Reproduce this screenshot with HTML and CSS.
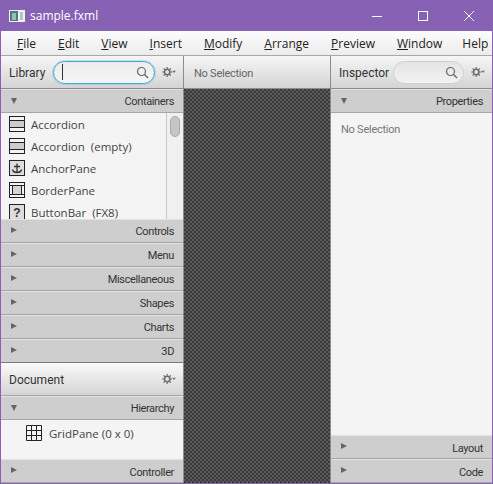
FILE: index.html
```html
<!DOCTYPE html>
<html>
<head>
    <title>sample.fxml</title>
    <link rel="stylesheet" href="styles.css">
</head>
<body>

<div class="window">
    <div class="titlebar">
        <svg class="app-icon" width="16" height="14" viewBox="0 0 16 14">
            <rect x="0" y="1" width="16" height="12" fill="#eef2f0"/>
            <rect x="1" y="2" width="8" height="10" fill="#4d7a82"/>
            <rect x="3" y="4" width="4" height="7" fill="#9dbcb8"/>
            <rect x="11" y="3" width="3" height="8" fill="#b4c4c4"/>
        </svg>
        <span class="title">sample.fxml</span>
        <div class="win-buttons">
            <svg width="12" height="12" viewBox="0 0 12 12"><path d="M1 6.5h10" stroke="#fff"/></svg>
            <svg width="12" height="12" viewBox="0 0 12 12"><rect x="1.5" y="1.5" width="9" height="9" fill="none" stroke="#fff"/></svg>
            <svg width="12" height="12" viewBox="0 0 12 12"><path d="M1 1l10 10M11 1L1 11" stroke="#fff"/></svg>
        </div>
    </div>

    <div class="menubar">
        <span><u>F</u>ile</span>
        <span><u>E</u>dit</span>
        <span><u>V</u>iew</span>
        <span><u>I</u>nsert</span>
        <span><u>M</u>odify</span>
        <span><u>A</u>rrange</span>
        <span><u>P</u>review</span>
        <span><u>W</u>indow</span>
        <span>Help</span>
    </div>

    <div class="main">
        <div class="left">
            <div class="toolbar">
                <span class="tool-label">Library</span>
                <div class="search focused">
                    <span class="caret"></span>
                    <svg width="13" height="13" viewBox="0 0 13 13"><circle cx="5.5" cy="5.5" r="4" fill="none" stroke="#666" stroke-width="1.2"/><path d="M8.5 8.5l3.5 3.5" stroke="#666" stroke-width="1.4"/></svg>
                </div>
                <svg class="gear" width="14" height="10" viewBox="0 0 15 11"><use href="#gear"/></svg>
            </div>

            <div class="section open"><span class="arrow-down"></span>Containers</div>
            <div class="lib-list">
                <div class="lib-items">
                    <div class="lib-item">
                        <svg width="16" height="16" viewBox="0 0 16 16"><rect x="0.5" y="0.5" width="15" height="15" fill="#ccc" stroke="#222"/><path d="M0 4.5h16M0 11.5h16" stroke="#222"/><rect x="1" y="1" width="14" height="3" fill="#f4f4f4"/><rect x="1" y="12" width="14" height="3" fill="#f4f4f4"/></svg>
                        <span>Accordion</span>
                    </div>
                    <div class="lib-item">
                        <svg width="16" height="16" viewBox="0 0 16 16"><rect x="0.5" y="0.5" width="15" height="15" fill="#ccc" stroke="#222"/><path d="M0 4.5h16M0 11.5h16" stroke="#222"/><rect x="1" y="1" width="14" height="3" fill="#f4f4f4"/><rect x="1" y="12" width="14" height="3" fill="#f4f4f4"/></svg>
                        <span>Accordion&nbsp; (empty)</span>
                    </div>
                    <div class="lib-item">
                        <svg width="16" height="16" viewBox="0 0 16 16"><rect x="0.5" y="0.5" width="15" height="15" fill="#ddd" stroke="#222"/><path d="M8 3.5v9M5 6.5h6M3.5 9.5c.5 2.5 2.5 3 4.5 3s4-.5 4.500-3" fill="none" stroke="#333" stroke-width="1.300"/></svg>
                        <span>AnchorPane</span>
                    </div>
                    <div class="lib-item">
                        <svg width="16" height="16" viewBox="0 0 16 16"><rect x="0.5" y="0.5" width="15" height="15" fill="#f4f4f4" stroke="#222"/><rect x="3.5" y="3.5" width="9" height="9" fill="#d4d4d4"/><path d="M0 3.500h16M0 12.500h16M3.500 3v10M12.500 3v10" stroke="#222"/></svg>
                        <span>BorderPane</span>
                    </div>
                    <div class="lib-item">
                        <svg width="16" height="16" viewBox="0 0 16 16"><rect x="0.5" y="0.5" width="15" height="15" fill="#ddd" stroke="#222"/><text x="8" y="13" text-anchor="middle" class="q-mark">?</text></svg>
                        <span>ButtonBar&nbsp; (FX8)</span>
                    </div>
                </div>
                <div class="scroll-track"><div class="scroll-thumb"></div></div>
            </div>

            <div class="section"><span class="arrow-right"></span>Controls</div>
            <div class="section"><span class="arrow-right"></span>Menu</div>
            <div class="section"><span class="arrow-right"></span>Miscellaneous</div>
            <div class="section"><span class="arrow-right"></span>Shapes</div>
            <div class="section"><span class="arrow-right"></span>Charts</div>
            <div class="section last"><span class="arrow-right"></span>3D</div>

            <div class="toolbar doc-bar">
                <span class="tool-label">Document</span>
                <svg class="gear" width="14" height="10" viewBox="0 0 15 11"><use href="#gear"/></svg>
            </div>

            <div class="section open"><span class="arrow-down"></span>Hierarchy</div>
            <div class="hierarchy">
                <svg width="16" height="16" viewBox="0 0 16 16"><path d="M.5.500h15v15H.5zM5.500 0v16M10.500 0v16M0 5.500h16M0 10.500h16" fill="none" stroke="#222"/></svg>
                <span>GridPane (0 x 0)</span>
            </div>
            <div class="section tail"><span class="arrow-right"></span>Controller</div>
        </div>

        <div class="center">
            <div class="toolbar center-bar">No Selection</div>
            <div class="canvas"></div>
        </div>

        <div class="right">
            <div class="toolbar">
                <span class="tool-label">Inspector</span>
                <div class="search">
                    <svg width="13" height="13" viewBox="0 0 13 13"><circle cx="5.500" cy="5.500" r="4" fill="none" stroke="#666" stroke-width="1.200"/><path d="M8.500 8.500l3.500 3.500" stroke="#666" stroke-width="1.400"/></svg>
                </div>
                <svg class="gear" width="14" height="10" viewBox="0 0 15 11"><use href="#gear"/></svg>
            </div>
            <div class="section open"><span class="arrow-down"></span>Properties</div>
            <div class="props">No Selection</div>
            <div class="section tail"><span class="arrow-right"></span>Layout</div>
            <div class="section tail"><span class="arrow-right"></span>Code</div>
        </div>
    </div>
</div>

<svg class="defs" width="0" height="0">
    <defs>
        <g id="gear">
            <circle cx="5.500" cy="5.500" r="3" fill="none" stroke="#6a6a6a" stroke-width="1.800"/>
            <path d="M5.500 0v2M5.500 9v2M0 5.500h2M9 5.500h2M1.600 1.600l1.400 1.400M8 8l1.400 1.400M9.400 1.600L8 3M3 8L1.600 9.400" stroke="#6a6a6a" stroke-width="1.300"/>
            <path d="M11 4h4l-2 2.500z" fill="#6a6a6a"/>
        </g>
    </defs>
</svg>

</body>
</html>
```

FILE: styles.css
```css
* {
    box-sizing: border-box;
}

body {
    margin: 0;
    font-family: 'Open Sans', 'Noto Sans', sans-serif;
    font-size: 12px;
    color: #333;
    background-color: #f4f4f4;
}

.window {
    width: 493px;
    height: 484px;
    display: flex;
    flex-direction: column;
    border: 1px solid #8661b4;
    border-top: none;
    overflow: hidden;
}

.titlebar {
    height: 31px;
    flex: none;
    margin: 0 -1px;
    padding: 0 18px 0 9px;
    display: flex;
    align-items: center;
    background-color: #8661b4;
    color: #fff;
}

.app-icon {
    margin-right: 5px;
}

.title {
    font-size: 12px;
}

.win-buttons {
    margin-left: auto;
    display: flex;
    gap: 34px;
}

.menubar {
    height: 25px;
    flex: none;
    display: flex;
    align-items: center;
    gap: 22px;
    padding: 0 5px 0 16px;
    background: linear-gradient(#fcfcfc, #ececec);
    border-bottom: 1px solid #a8a8a8;
    color: #222;
}

.menubar span:last-child {
    margin-left: -2px;
}

.main {
    flex: 1;
    display: flex;
    min-height: 0;
}

.left {
    width: 183px;
    flex: none;
    display: flex;
    flex-direction: column;
    border-right: 1px solid #8c8c8c;
}

.center {
    width: 146px;
    flex: none;
    display: flex;
    flex-direction: column;
}

.right {
    flex: 1;
    display: flex;
    flex-direction: column;
    border-left: 1px solid #8c8c8c;
}

.toolbar {
    height: 33px;
    flex: none;
    display: flex;
    align-items: center;
    padding: 0 7px 0 8px;
    background: linear-gradient(#f6f6f6, #d4d4d4);
    border-bottom: 1px solid #8c8c8c;
}

.tool-label {
    padding-top: 2px;
    font-family: Roboto, 'Open Sans', sans-serif;
    font-size: 12px;
    color: #333;
}

.gear {
    margin-left: 7px;
    flex: none;
}

.search {
    flex: 1;
    height: 23px;
    margin-left: 8px;
    display: flex;
    align-items: center;
    padding: 0 5px 0 8px;
    border: 1px solid #d0d0d0;
    border-radius: 12px;
    background: linear-gradient(#e4e4e4, #f2f2f2);
}

.right .search {
    margin-left: 4px;
}

.search svg {
    margin-left: auto;
}

.search.focused {
    border-color: #3fa9d0;
    background: linear-gradient(#ececec, #f6f6f6);
    box-shadow: 0 0 0 1px rgba(63, 169, 208, 0.25);
}

.caret {
    width: 1px;
    height: 16px;
    background-color: #333;
}

.section {
    height: 24px;
    flex: none;
    position: relative;
    display: flex;
    align-items: center;
    justify-content: flex-end;
    padding: 0 9px 0 0;
    background-color: #cecece;
    border-bottom: 1px solid #a6a6a6;
    border-top: 1px solid #e2e2e2;
    color: #333;
    font-family: Roboto, 'Open Sans', sans-serif;
    font-size: 11px;
    letter-spacing: -0.35px;
}

.section.tail {
    padding-top: 2px;
}

.section.last {
    border-bottom-color: #7c7c7c;
}

.arrow-right,
.arrow-down {
    position: absolute;
    left: 10px;
    width: 0;
    height: 0;
}

.arrow-right {
    top: 7px;
    border-left: 6px solid #666;
    border-top: 3px solid transparent;
    border-bottom: 3px solid transparent;
}

.arrow-down {
    top: 8px;
    border-top: 6px solid #666;
    border-left: 3px solid transparent;
    border-right: 3px solid transparent;
}

.lib-list {
    height: 106px;
    flex: none;
    display: flex;
    overflow: hidden;
    background-color: #f4f4f4;
}

.lib-items {
    flex: 1;
    overflow: hidden;
    padding-left: 8px;
}

.lib-item {
    height: 22px;
    display: flex;
    align-items: center;
    gap: 6px;
    color: #444;
    font-size: 11.500px;
}

.q-mark {
    font-family: 'Liberation Sans', sans-serif;
    font-size: 12px;
    font-weight: bold;
    fill: #333;
}

.scroll-track {
    width: 17px;
    flex: none;
    padding: 3px 3px;
    border-left: 1px solid #c8c8c8;
    background-color: #f0f0f0;
}

.scroll-thumb {
    width: 10px;
    height: 21px;
    border-radius: 5px;
    background-color: #c6c6c6;
    border: 1px solid #aaa;
}

.doc-bar {
    justify-content: space-between;
    background: linear-gradient(#fafafa, #d4d4d4);
    border-bottom-color: #a6a6a6;
}

.hierarchy {
    flex: 1;
    display: flex;
    align-items: flex-start;
    gap: 7px;
    padding: 5px 0 0 25px;
    color: #444;
    font-size: 11.500px;
}

.hierarchy span {
    padding-top: 1px;
}

.center-bar {
    padding: 2px 0 0 10px;
    color: #666;
    font-family: Roboto, 'Open Sans', sans-serif;
    font-size: 11px;
    letter-spacing: -0.25px;
}

.canvas {
    flex: 1;
    background-color: #3e3e3e;
    background-image: repeating-conic-gradient(#5a5a5a 0 25%, #3a3a3a 0 50%);
    background-size: 4px 4px;
}

.props {
    flex: 1;
    padding: 10px 10px;
    color: #777;
    font-family: Roboto, 'Open Sans', sans-serif;
    font-size: 11px;
    letter-spacing: -0.25px;
}

.defs {
    position: absolute;
}
```
